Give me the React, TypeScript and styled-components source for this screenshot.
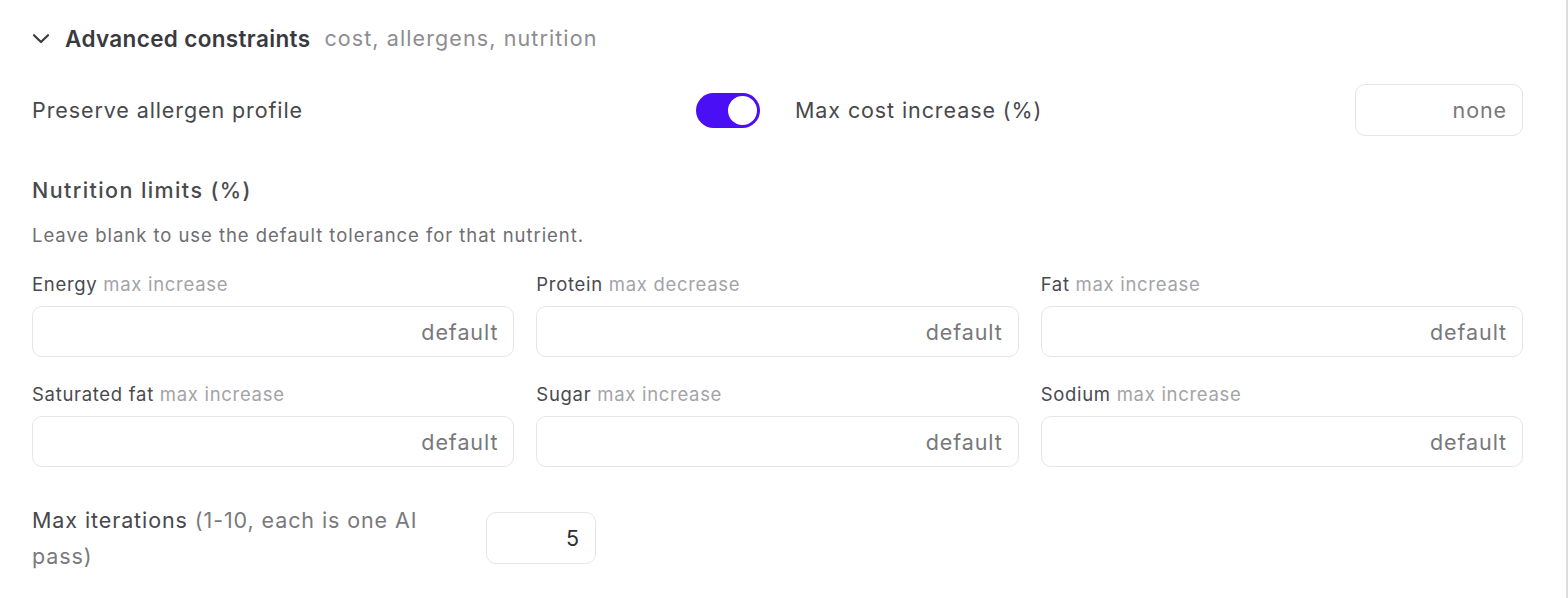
import React from "react";
import styled, { createGlobalStyle } from "styled-components";

const Global = createGlobalStyle`
  html, body { margin: 0; padding: 0; background: #ffffff; }
  body { font-family: Inter, "Noto Sans", sans-serif; -webkit-font-smoothing: antialiased; }
  * { box-sizing: border-box; }
`;

const Panel = styled.div`
  width: 1568px;
  height: 598px;
  border-right: 2px solid #dcdce1;
  padding: 23px 43px 0 32px;
  overflow: hidden;
`;

const Header = styled.div`
  display: flex;
  align-items: center;
  height: 30px;
`;

const Chevron = styled.svg`
  width: 18px;
  height: 11px;
  margin-right: 15px;
  color: #3b3b3f;
`;

const Title = styled.span`
  font-size: 22.5px;
  font-weight: 600;
  color: #3a3a3e;
  letter-spacing: 0.35px;
`;

const Subtitle = styled.span`
  font-size: 21.5px;
  font-weight: 400;
  color: #8d8d92;
  margin-left: 14px;
  letter-spacing: 1.1px;
`;

const TopRow = styled.div`
  display: grid;
  grid-template-columns: 1fr 1fr;
  column-gap: 35px;
  margin-top: 31px;
`;

const Half = styled.div`
  display: flex;
  align-items: center;
  justify-content: space-between;
  height: 52px;
`;

const RowLabel = styled.span`
  font-size: 21.5px;
  color: #48484c;
  letter-spacing: 0.9px;
`;

const Toggle = styled.div<{ $on: boolean }>`
  width: 64px;
  height: 35px;
  border-radius: 18px;
  background: ${(p) => (p.$on ? "#4a0ff4" : "#d4d4d8")};
  padding: 3px;
  display: flex;
  justify-content: ${(p) => (p.$on ? "flex-end" : "flex-start")};
`;

const Knob = styled.div`
  width: 29px;
  height: 29px;
  border-radius: 50%;
  background: #ffffff;
`;

const Field = styled.input<{ $w?: string; $h?: string }>`
  width: ${(p) => p.$w || "100%"};
  height: ${(p) => p.$h || "51px"};
  border: 1.5px solid #e6e6ea;
  border-radius: 10px;
  background: #ffffff;
  padding: 0 15px;
  text-align: right;
  font-family: Inter, "Noto Sans", sans-serif;
  font-size: 21.5px;
  letter-spacing: 0.9px;
  color: #2f2f33;
  outline: none;
  &::placeholder { color: #78787c; }
`;

const SectionTitle = styled.div`
  font-size: 21.5px;
  font-weight: 500;
  color: #4a4a4e;
  line-height: 28px;
  margin-top: 40px;
  letter-spacing: 1.4px;
`;

const Hint = styled.div`
  font-size: 18.5px;
  color: #6e6e72;
  line-height: 24px;
  margin-top: 19px;
  letter-spacing: 0.95px;
`;

const Grid = styled.div`
  display: grid;
  grid-template-columns: repeat(3, 1fr);
  column-gap: 22px;
  row-gap: 25px;
  margin-top: 25px;
`;

const Cell = styled.div`
  display: flex;
  flex-direction: column;
  gap: 10px;
`;

const FieldLabel = styled.div`
  font-size: 18.5px;
  line-height: 24px;
  color: #4a4a4e;
  letter-spacing: 0.7px;
`;

const Muted = styled.span`
  color: #a3a3a8;
`;

const IterRow = styled.div`
  display: flex;
  align-items: center;
  gap: 14px;
  margin-top: 35px;
`;

const IterLabel = styled.div`
  width: 440px;
  padding-right: 20px;
  font-size: 21.5px;
  line-height: 36px;
  color: #48484c;
  letter-spacing: 0.9px;
`;

const IterMuted = styled.span`
  color: #79797d;
`;

const nutrients: [string, string][] = [
  ["Energy", "max increase"],
  ["Protein", "max decrease"],
  ["Fat", "max increase"],
  ["Saturated fat", "max increase"],
  ["Sugar", "max increase"],
  ["Sodium", "max increase"],
];

export default function App() {
  return (
    <>
      <Global />
      <Panel>
        <Header>
          <Chevron viewBox="0 0 18 11" fill="none" stroke="currentColor" strokeWidth={2.2} strokeLinecap="round" strokeLinejoin="round">
            <path d="M2 2.2l7 6.8 7-6.8" />
          </Chevron>
          <Title>Advanced constraints</Title>
          <Subtitle>cost, allergens, nutrition</Subtitle>
        </Header>

        <TopRow>
          <Half>
            <RowLabel>Preserve allergen profile</RowLabel>
            <Toggle $on>
              <Knob />
            </Toggle>
          </Half>
          <Half>
            <RowLabel>Max cost increase (%)</RowLabel>
            <Field $w="168px" $h="52px" placeholder="none" />
          </Half>
        </TopRow>

        <SectionTitle>Nutrition limits (%)</SectionTitle>
        <Hint>Leave blank to use the default tolerance for that nutrient.</Hint>

        <Grid>
          {nutrients.map(([name, hint]) => (
            <Cell key={name}>
              <FieldLabel>
                {name} <Muted>{hint}</Muted>
              </FieldLabel>
              <Field placeholder="default" />
            </Cell>
          ))}
        </Grid>

        <IterRow>
          <IterLabel>
            Max iterations <IterMuted>(1-10, each is one AI pass)</IterMuted>
          </IterLabel>
          <Field $w="110px" $h="52px" defaultValue="5" />
        </IterRow>
      </Panel>
    </>
  );
}
